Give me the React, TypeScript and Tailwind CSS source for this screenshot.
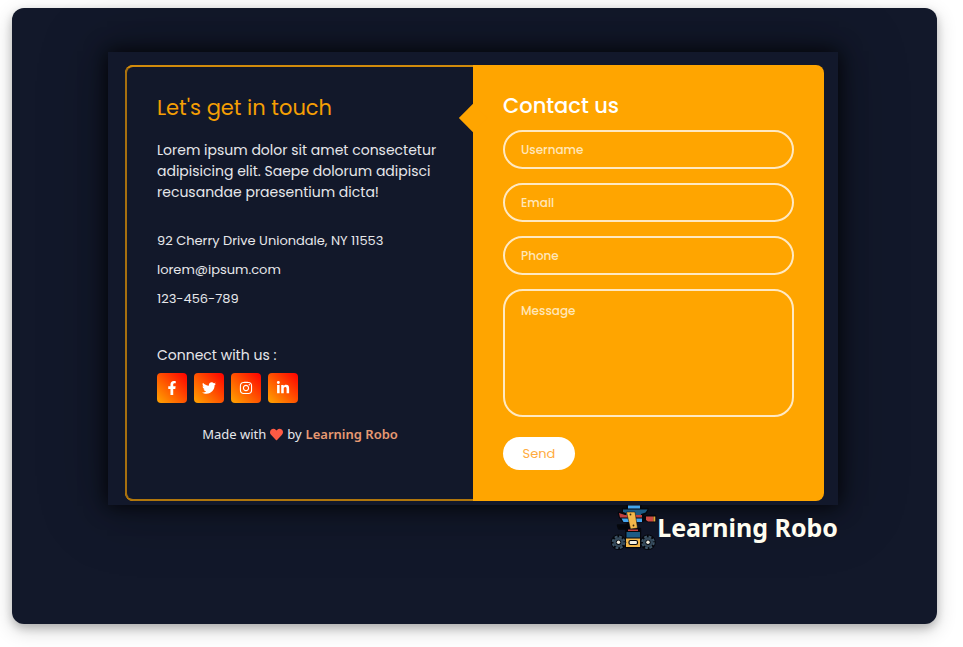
import { FaFacebookF, FaTwitter, FaInstagram, FaLinkedinIn, FaHeart } from "react-icons/fa";

const socials = [
  { label: "Facebook", Icon: FaFacebookF },
  { label: "Twitter", Icon: FaTwitter },
  { label: "Instagram", Icon: FaInstagram },
  { label: "LinkedIn", Icon: FaLinkedinIn },
];

const fields = [
  { id: "username", label: "Username", type: "text" },
  { id: "email", label: "Email", type: "email" },
  { id: "phone", label: "Phone", type: "tel" },
];

function Wheel({ cx }: { cx: number }) {
  return (
    <g>
      <circle cx={cx} cy="37.3" r="7.7" fill="#05070c" />
      <circle cx={cx} cy="37.3" r="5" fill="#34495a" />
      <circle cx={cx} cy="37.3" r="5.8" fill="none" stroke="#3d5466" strokeWidth="2" strokeDasharray="2.8 1.75" />
      <circle cx={cx} cy="37.3" r="2.6" fill="#0a0d13" />
      <circle cx={cx} cy="37.3" r="1.7" fill="#f3efe0" />
    </g>
  );
}

function RobotLogo() {
  return (
    <svg viewBox="0 0 46 46" className="h-[46px] w-[46px] shrink-0" aria-hidden="true">
      <g fill="#05070c" stroke="#05070c" strokeWidth="2.4" strokeLinejoin="round">
        <path d="M16.5 1h13v3h7l-2 4-3 1v7H12l-3-4-1-4h5l-1-4h4.5z" />
        <path d="M7 20.5h8l3-3h4v6H8z" />
        <path d="M31 12h4l1-1h8v5h-7l-2-1h-4z" />
        <path d="M15.5 24h13.5v18H15z" />
      </g>
      <path d="M17 .5h12v3H17z" fill="#43a5ee" />
      <path d="M12 4.5h24.5l-2 3-4.500 1.500v2H15V8l-3-1z" fill="#1d5b84" />
      <path d="M8 8l6 2h17v2.500H9z" fill="#c2413f" />
      <path d="M10.500 13.500H31V17H12.500z" fill="#43a5ee" />
      <path d="M35 11.500h7v5h-5l-2-1.500z" fill="#cf4a45" />
      <path d="M42.300 11.500h2v5h-2z" fill="#e5a63a" />
      <path d="M15.500 7h8.500l2.500 16-7 1z" fill="#f4b84a" stroke="#05070c" strokeWidth=".5" />
      <path d="M17 24.500h10V26H17z" fill="#c2413f" />
      <path d="M15.500 27h13.500v5.500H15.500z" fill="#1d5b84" />
      <path d="M15 33.500h14v8.500H15z" fill="#f4b84a" />
      <rect x="18" y="35.500" width="8.500" height="4" rx="1.500" fill="#f3efe0" stroke="#05070c" strokeWidth="1.200" />
      <circle cx="19.500" cy="9.500" r=".9" fill="#3b2a10" />
      <circle cx="22.500" cy="20.500" r=".9" fill="#3b2a10" />
      <Wheel cx={7.5} />
      <Wheel cx={37} />
    </svg>
  );
}

export default function App() {
  return (
    <div className="bg-white pt-2 pr-[26px] pb-[23px] pl-3 font-['Poppins','Inter',sans-serif]">
      <main className="rounded-xl bg-[#12182a] pt-11 pr-[99px] pb-[73px] pl-24 shadow-[0_4px_8px_rgba(0,0,0,0.2),0_6px_20px_rgba(0,0,0,0.19)]">
        <div className="bg-[#12182b] pt-[13px] pr-[14px] pb-1 pl-[17px] shadow-[0_0_20px_1px_rgba(0,0,0,0.85),0_0_60px_10px_rgba(0,0,0,0.2)]">
          <div className="grid grid-cols-[348fr_351fr] overflow-hidden rounded-lg bg-[#ffa500]">
            <section className="rounded-l-lg border-y-2 border-l-2 border-t-[#d18b0c] border-b-[#b0760c] border-l-[#a66f0f] bg-[#12182a] px-[30px] pt-[25px] pb-7 text-[14px] text-[#e6e7ea]">
              <h1 className="text-[21px] leading-8 text-[#f59f04]">Let&apos;s get in touch</h1>
              <p className="mt-4 leading-[21px]">
                Lorem ipsum dolor sit amet consectetur adipisicing elit. Saepe dolorum adipisci recusandae praesentium dicta!
              </p>
              <address className="mt-[23px] text-[13px] leading-[29px] not-italic">
                <p>92 Cherry Drive Uniondale, NY 11553</p>
                <p>lorem@ipsum.com</p>
                <p>123-456-789</p>
              </address>
              <p className="mt-8 leading-[21px]">Connect with us :</p>
              <div className="mt-[7px] flex gap-[7px]">
                {socials.map(({ label, Icon }) => (
                  <a
                    key={label}
                    href="#"
                    aria-label={label}
                    className="flex h-[30px] w-[30px] items-center justify-center rounded bg-linear-45/srgb from-[#ffa500] to-[#ff0000] text-white"
                  >
                    <Icon size={14} />
                  </a>
                ))}
              </div>
              <p className="mt-5 flex items-center justify-center gap-1 font-['Noto_Sans',sans-serif] text-[13px] leading-[22px]">
                Made with <FaHeart size={13} className="text-[#ff5a44]" aria-label="love" /> by{" "}
                <a href="#" className="font-semibold text-[#e89a72]">Learning Robo</a>
              </p>
            </section>

            <form className="relative flex flex-col px-[30px] pt-[25px] pb-[31px]" onSubmit={(e) => e.preventDefault()}>
              <span className="absolute top-[43px] -left-[10px] h-5 w-5 rotate-45 bg-[#ffa500]" />
              <h2 className="text-[21px] leading-8 font-medium text-white">Contact us</h2>
              <div className="mt-2 flex flex-col gap-[14px]">
                {fields.map((f) => (
                  <input
                    key={f.id}
                    id={f.id}
                    type={f.type}
                    aria-label={f.label}
                    placeholder={f.label}
                    className="h-[39px] w-full rounded-full border-2 border-[#ffe9c2] bg-transparent px-4 text-[12px] font-medium text-white outline-none placeholder:text-[#ffe6b8]"
                  />
                ))}
                <textarea
                  id="message"
                  aria-label="Message"
                  placeholder="Message"
                  className="h-32 w-full resize-none rounded-[20px] border-2 border-[#ffe9c2] bg-transparent px-4 py-[10px] text-[12px] leading-5 font-medium text-white outline-none placeholder:text-[#ffe6b8]"
                />
              </div>
              <button type="submit" className="mt-5 h-[33px] w-[72px] rounded-full bg-white text-[13px] text-[#ffab40]">
                Send
              </button>
            </form>
          </div>
        </div>
        <div className="flex items-start justify-end font-['Noto_Sans',sans-serif] text-[25px] leading-[44px] font-bold text-[#fffdf0]">
          <RobotLogo />
          <span>Learning Robo</span>
        </div>
      </main>
    </div>
  );
}
